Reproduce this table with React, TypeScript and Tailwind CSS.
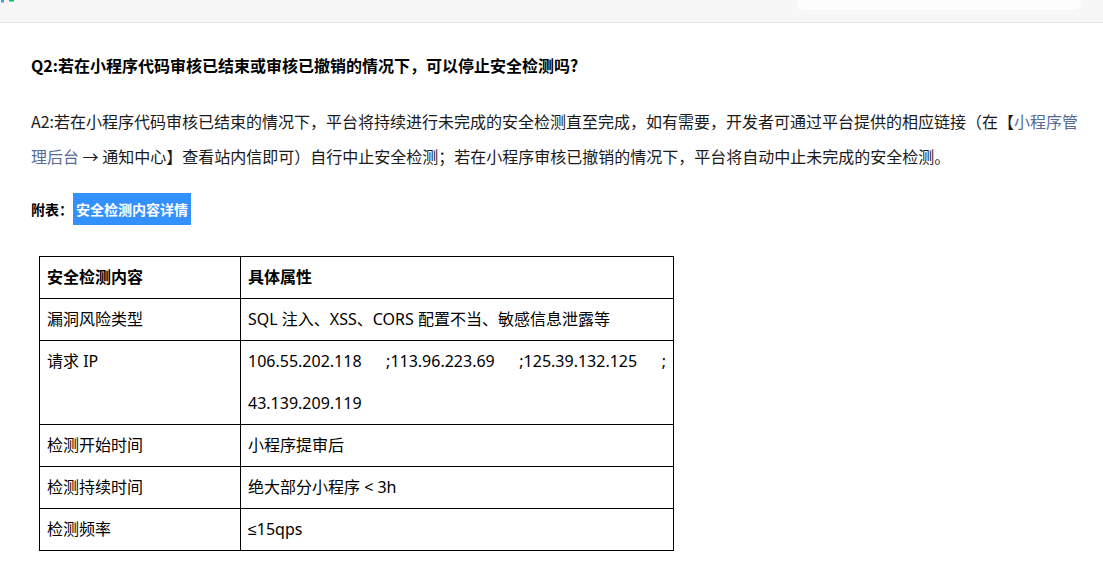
import React from 'react';

export default function App() {
  const rows: { name: string; value: React.ReactNode; justify?: boolean }[] = [
    { name: '漏洞风险类型', value: 'SQL 注入、XSS、CORS 配置不当、敏感信息泄露等' },
    { name: '请求 IP', value: '106.55.202.118 ;113.96.223.69 ;125.39.132.125 ; 43.139.209.119', justify: true },
    { name: '检测开始时间', value: '小程序提审后' },
    { name: '检测持续时间', value: '绝大部分小程序 < 3h' },
    {
      name: '检测频率',
      value: (
        <>
          <span className="font-['Liberation_Sans',sans-serif]">≤</span>15qps
        </>
      )
    }
  ];

  return (
    <div className="w-[1103px] h-[580px] bg-white overflow-hidden font-['Noto_Sans_CJK_SC','Noto_Sans',sans-serif]">
      <div className="h-[23px] bg-[#f7f7f7] border-b border-[#e4e4e4] flex items-start">
        <svg width="16" height="3" viewBox="0 0 16 3" className="block">
          <rect x="1" y="0" width="3" height="2.5" fill="#33a3f4" />
          <rect x="9" y="0" width="5" height="1.5" fill="#07c160" />
        </svg>
        <div className="ml-auto mr-[22px] w-[284px] h-[10px] bg-[#fdfdfd] rounded-b-[6px]" />
      </div>

      <div className="px-[31px]">
        <h3 className="mt-[30px] text-[16px] leading-[24px] font-bold text-black">
          Q2:若在小程序代码审核已结束或审核已撤销的情况下，可以停止安全检测吗?
        </h3>

        <p className="mt-[27px] text-[16px] leading-[35px] text-[#1a1a1a] w-[1058px]">
          A2:若在小程序代码审核已结束的情况下，平台将持续进行未完成的安全检测直至完成，如有需要，开发者可通过平台提供的相应链接（在【
          <span className="text-[#576b95]">小程序管理后台</span> → 通知中心】查看站内信即可）自行中止安全检测；若在小程序审核已撤销的情况下，平台将自动中止未完成的安全检测。
        </p>

        <div className="mt-[19px] flex items-center h-[32px] text-[14px] font-bold">
          <span className="text-black">附表：</span>
          <span className="h-full flex items-center px-[3px] bg-[#3390ff] text-white">安全检测内容详情</span>
        </div>

        <table className="mt-[31px] ml-[8px] w-[635px] border-collapse text-[16px] leading-[41.2px] text-black font-['Noto_Sans','Noto_Sans_CJK_SC',sans-serif]">
          <thead>
            <tr>
              <th className="w-[201px] border border-black px-[7px] text-left font-bold">安全检测内容</th>
              <th className="border border-black px-[7px] text-left font-bold">具体属性</th>
            </tr>
          </thead>
          <tbody>
            {rows.map((row, i) => (
              <tr key={i}>
                <td className="border border-black px-[7px] align-top">{row.name}</td>
                <td className={row.justify ? 'border border-black px-[7px] align-top text-justify' : 'border border-black px-[7px] align-top'}>
                  {row.value}
                </td>
              </tr>
            ))}
          </tbody>
        </table>
      </div>
    </div>
  );
}
